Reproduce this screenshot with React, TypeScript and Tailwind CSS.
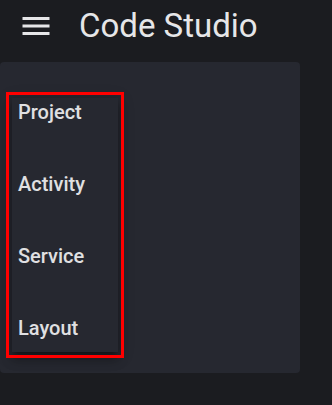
import React from "react";

export default function App() {
  const items = ["Project", "Activity", "Service", "Layout"];
  return (
    <div
      className="w-[332px] h-[405px] bg-[#1b1c20] overflow-hidden"
      style={{ fontFamily: "Roboto, 'Liberation Sans', sans-serif" }}
    >
      <div className="h-[52px] flex items-center pl-[18px]">
        <svg width="36" height="36" viewBox="0 0 24 24" fill="#e6e6e8">
          <path d="M3 18h18v-2H3v2zm0-5h18v-2H3v2zm0-7v2h18V6H3z" />
        </svg>
        <span className="ml-[25px] text-[33px] leading-[40px] text-[#e6e6e8] font-normal">
          Code Studio
        </span>
      </div>
      <div className="mt-[10px] w-[300px] h-[311px] bg-[#262830] rounded-[4px] pt-[36px] pl-[12px]">
        <div className="w-[106px] h-[254px] bg-[#262830] outline-[3px] outline-solid outline-[#ff0000] outline-offset-[3px] shadow-[0_5px_5px_-3px_rgba(0,0,0,0.3),0_8px_10px_1px_rgba(0,0,0,0.2),0_3px_14px_2px_rgba(0,0,0,0.18)] flex flex-col gap-[48px] pt-[2px] pl-[6px]">
          {items.map((t) => (
            <div key={t} className="text-[20px] leading-[24px] font-medium text-[#e0e0e2]">
              {t}
            </div>
          ))}
        </div>
      </div>
    </div>
  );
}
